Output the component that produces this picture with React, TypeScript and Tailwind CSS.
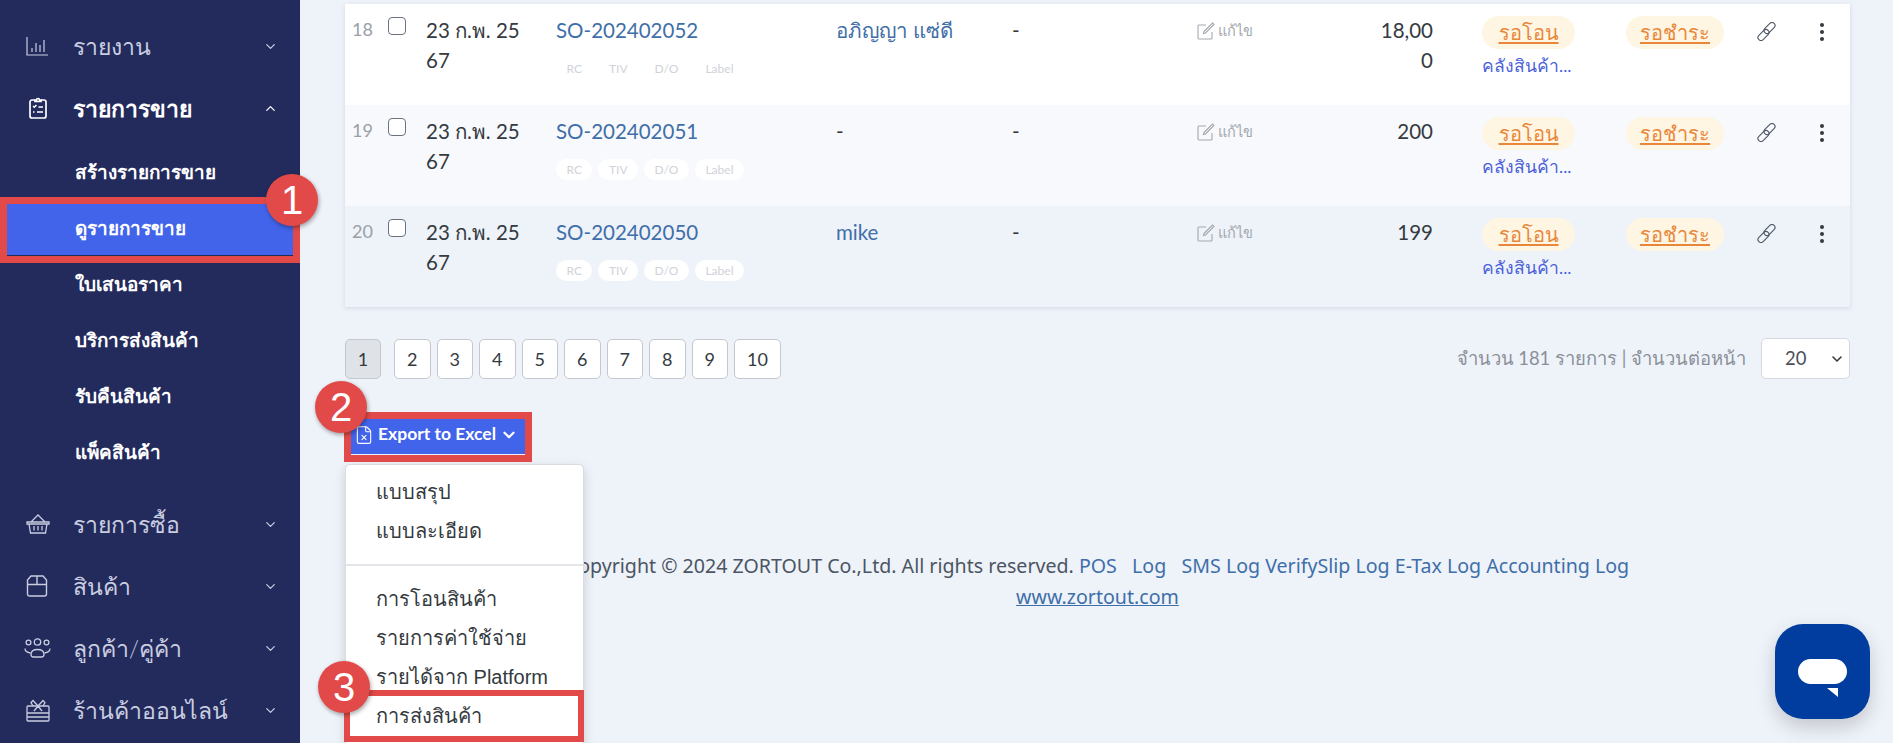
import { ChevronDown, ChevronUp, FileX } from "lucide-react";

const ROWS = [
  { no: 18, so: "SO-202402052", customer: "อภิญญา แซ่ดี", amount: "18,000", bg: "bg-white", isLink: true },
  { no: 19, so: "SO-202402051", customer: "-", amount: "200", bg: "bg-[#f7f9fc]", isLink: false },
  { no: 20, so: "SO-202402050", customer: "mike", amount: "199", bg: "bg-[#eef2f9]", isLink: true },
];

const SUB_MENU = ["สร้างรายการขาย", "ดูรายการขาย", "ใบเสนอราคา", "บริการส่งสินค้า", "รับคืนสินค้า", "แพ็คสินค้า"];
const TAGS = ["RC", "TIV", "D/O", "Label"];
const PAGES = [1, 2, 3, 4, 5, 6, 7, 8, 9, 10];

function BarsIcon() {
  return (
    <svg width="22" height="19" viewBox="0 0 22 19" fill="none" stroke="currentColor" strokeWidth="1.2">
      <path d="M1 0v18h21M6 15v-4M10 15V6M14 15V8M18 15V3" />
    </svg>
  );
}

function ClipboardIcon() {
  return (
    <svg width="18" height="22" viewBox="0 0 18 22" fill="none" stroke="currentColor" strokeWidth="1.7" className="ml-[3px]">
      <path d="M6 3H3a2 2 0 0 0-2 2v14a2 2 0 0 0 2 2h12a2 2 0 0 0 2-2V5a2 2 0 0 0-2-2h-3" />
      <path d="M6 4.500V3h1.500a1.500 1.500 0 0 1 3 0H12v1.500z" />
      <path d="M4 9l1.300 1.300L7.500 8M4 15h1.500M9.500 10H14M8 15h6" strokeWidth="1.5" />
    </svg>
  );
}

function BasketIcon() {
  return (
    <svg width="24" height="20" viewBox="0 0 24 20" fill="none" stroke="currentColor" strokeWidth="1.3">
      <path d="M5 8l7-7 7 7M1 8h22v2H1zM3 10l1.500 9h15L21 10M8 12v4.500M12 12v4.500M16 12v4.500" />
    </svg>
  );
}

function BoxIcon() {
  return (
    <svg width="22" height="22" viewBox="0 0 22 22" fill="none" stroke="currentColor" strokeWidth="1.4">
      <path d="M5 1h12l3.500 4v14a2 2 0 0 1-2 2h-15a2 2 0 0 1-2-2V5zM1.500 9.500h19M11 1v8.500" />
    </svg>
  );
}

function PeopleIcon() {
  return (
    <svg width="27" height="20" viewBox="0 0 27 20" fill="none" stroke="currentColor" strokeWidth="1.3" className="-ml-[2px]">
      <circle cx="13.5" cy="4" r="3.2" />
      <circle cx="4.5" cy="4.5" r="2.4" />
      <circle cx="22.5" cy="4.5" r="2.4" />
      <path d="M9.500 19a2.500 2.500 0 0 1-2.500-2.500c0-3 2.500-5 6.500-5s6.500 2 6.500 5a2.500 2.500 0 0 1-2.500 2.500z" />
      <path d="M6.500 15C3 14.500 1 13 1 10.500M20.500 15c3.500-.5 5.500-2 5.500-4.500" />
    </svg>
  );
}

function GiftIcon() {
  return (
    <svg width="24" height="23" viewBox="0 0 24 23" fill="none" stroke="currentColor" strokeWidth="1.3">
      <path d="M2 7h20a1 1 0 0 1 1 1v13a1 1 0 0 1-1 1H2a1 1 0 0 1-1-1V8a1 1 0 0 1 1-1zM1 14h22M1 18h22" />
      <path d="M12 7L7 1.500 5 3.500 7 7M12 7l5-5.500 2 2L17 7M12 7l-4 5M12 7l4 5" />
    </svg>
  );
}

function ChainIcon() {
  return (
    <svg width="19" height="19" viewBox="0 0 19 19" fill="none" stroke="currentColor" strokeWidth="1.1">
      <rect x="9.500" y="-0.500" width="6" height="13" rx="3" transform="rotate(45 12.500 6)" />
      <rect x="3.500" y="6.500" width="6" height="13" rx="3" transform="rotate(45 6.500 13)" />
    </svg>
  );
}

function MainItem({ icon, label, open }: { icon: React.ReactNode; label: string; open?: boolean }) {
  return (
    <div className={`flex h-[62px] items-center pb-[2px] pl-[26px] pr-[22px] ${open ? "text-white" : "text-[#c9cde0]"}`}>
      <span className="flex w-[47px] shrink-0">{icon}</span>
      <span className={`flex-1 text-[23px] ${open ? "font-bold" : "font-light"}`}>{label}</span>
      {open ? <ChevronUp size={15} /> : <ChevronDown size={15} />}
    </div>
  );
}

function Row({ row }: { row: (typeof ROWS)[number] }) {
  return (
    <div className={`grid h-[101px] grid-cols-[43px_38px_130px_280px_176px_185px_175px_61px_49px_144px_131px_58px_35px] pt-[11px] text-[20.500px] leading-[30px] text-[#343a40] ${row.bg}`}>
      <div className="pl-[7px] pt-[1px] text-[18px] leading-[26px] text-[#9aa0a8]">{row.no}</div>
      <div className="pt-[2px]">
        <div className="h-[18px] w-[18px] rounded-[4px] border border-[#6b7280] bg-white" />
      </div>
      <div className="w-[98px] break-all">23 ก.พ. 2567</div>
      <div>
        <div className="text-[#3f6fa8]">{row.so}</div>
        <div className="mt-[13px] flex gap-[6px] text-[12px] leading-[21px] text-[#cfd3d9]">
          {TAGS.map((t) => (
            <span key={t} className="rounded-full bg-white px-[10.500px]">{t}</span>
          ))}
        </div>
      </div>
      <div className={row.isLink ? "text-[#3f6fa8]" : ""}>{row.customer}</div>
      <div>-</div>
      <div className="flex h-[30px] items-center gap-[3px] pt-[2px] text-[14.500px] text-[#a3a8af]">
        <svg width="18" height="18" viewBox="0 0 18 18" fill="none" stroke="currentColor" strokeWidth="1.1">
          <path d="M15 10v6a1 1 0 0 1-1 1H2a1 1 0 0 1-1-1V4a1 1 0 0 1 1-1h7M7 9.500L15.500 1 17 2.500 8.500 11l-2 .5z" />
        </svg>
        แก้ไข
      </div>
      <div className="flex justify-end">
        <span className="w-[54px] break-all text-right">{row.amount}</span>
      </div>
      <div />
      <div className="pt-[1px]">
        <span className="block w-[93px] rounded-full bg-[#fef5e3] py-[2px] text-center text-[20px] leading-[29px] text-[#e8873a] underline underline-offset-2">รอโอน</span>
        <span className="mt-[5px] block text-[17.500px] leading-[24px] text-[#4a5fd9]">คลังสินค้า...</span>
      </div>
      <div className="pt-[1px]">
        <span className="block w-[98px] rounded-full bg-[#fef5e3] py-[2px] text-center text-[20px] leading-[29px] text-[#e8873a] underline underline-offset-2">รอชำระ</span>
      </div>
      <div className="pt-[7px] text-[#4b5563]">
        <ChainIcon />
      </div>
      <div className="flex flex-col gap-[3px] pl-[5px] pt-[8px]">
        <span className="h-[4px] w-[4px] rounded-full bg-[#343a40]" />
        <span className="h-[4px] w-[4px] rounded-full bg-[#343a40]" />
        <span className="h-[4px] w-[4px] rounded-full bg-[#343a40]" />
      </div>
    </div>
  );
}

export default function App() {
  return (
    <div className="relative flex h-[743px] w-[1893px] overflow-hidden bg-[#eef2f9] font-['Lato','Noto_Sans',sans-serif]">
      <aside className="w-[300px] shrink-0 bg-[#232a5c] pt-[16px]">
        <MainItem icon={<BarsIcon />} label="รายงาน" />
        <MainItem icon={<ClipboardIcon />} label="รายการขาย" open />
        <div className="pt-[4px]">
          {SUB_MENU.map((item, i) => (
            <div
              key={item}
              className={`flex h-[56px] items-center pl-[75px] text-[18.900px] font-bold text-white ${i === 1 ? "bg-[#4264ea]" : ""}`}
            >
              {item}
            </div>
          ))}
        </div>
        <div className="pt-[14px]">
          <MainItem icon={<BasketIcon />} label="รายการซื้อ" />
          <MainItem icon={<BoxIcon />} label="สินค้า" />
          <MainItem icon={<PeopleIcon />} label="ลูกค้า/คู่ค้า" />
          <MainItem icon={<GiftIcon />} label="ร้านค้าออนไลน์" />
        </div>
      </aside>

      <main className="relative flex-1 pl-[45px] pr-[44px] pt-[4px]">
        <div className="w-[1505px] shadow-[0_1px_4px_rgba(160,170,190,0.35)]">
          {ROWS.map((row) => (
            <Row key={row.no} row={row} />
          ))}
        </div>

        <div className="mt-[31px] flex items-center justify-between">
          <div className="flex gap-[6px] text-[18px] text-[#343a40]">
            {PAGES.map((p) => (
              <div
                key={p}
                className={`flex h-[40px] items-center justify-center rounded-[5px] border border-[#c4c8ce] pt-[1px] ${
                  p === 1 ? "mr-[7px] w-[36px] bg-[#dfe3e8]" : p === 10 ? "w-[47px] bg-white" : "w-[36.500px] bg-white"
                }`}
              >
                {p}
              </div>
            ))}
          </div>
          <div className="flex items-center gap-[15px] text-[18.400px] text-[#8a8f98]">
            จำนวน 181 รายการ | จำนวนต่อหน้า
            <div className="flex h-[41px] w-[89px] items-center justify-between rounded-[5px] border border-[#d5d9df] bg-white pl-[23px] pr-[4px] text-[#495057]">
              20
              <ChevronDown size={16} strokeWidth={2.4} className="text-[#343a40]" />
            </div>
          </div>
        </div>

        <div className="relative mt-[37px] w-fit">
          <button className="flex h-[38px] w-[180px] items-center gap-[4px] bg-[#4264ea] pb-[1px] pl-[9px] text-[17.500px] font-bold text-white">
            <FileX size={20} strokeWidth={1.3} />
            Export to Excel
            <ChevronDown size={18} strokeWidth={3} />
          </button>
        </div>

        <div className="mt-[97px] text-center font-['Noto_Sans',sans-serif] text-[19.600px] leading-[30.500px] text-[#4b5563]">
          <div>
            Copyright © 2024 ZORTOUT Co.,Ltd. All rights reserved. <span className="text-[#3f6fa8]">POS &nbsp; Log &nbsp; SMS Log VerifySlip Log E-Tax Log Accounting Log</span>
          </div>
          <div className="text-[#3f6fa8] underline">www.zortout.com</div>
        </div>
      </main>

      <div className="absolute left-[345px] top-[464px] h-[290px] w-[239px] rounded-[5px] border border-[#d9dce1] bg-white pt-[7px] font-['Liberation_Sans',sans-serif] text-[20px] text-[#343a40] shadow-[0_4px_12px_rgba(0,0,0,0.15)]">
        <div className="flex h-[39px] items-center pl-[30px]">แบบสรุป</div>
        <div className="flex h-[39px] items-center pl-[30px]">แบบละเอียด</div>
        <div className="mb-[13px] mt-[14px] h-[2px] bg-[#e3e5e8]" />
        <div className="flex h-[39px] items-center pl-[30px]">การโอนสินค้า</div>
        <div className="flex h-[39px] items-center pl-[30px]">รายการค่าใช้จ่าย</div>
        <div className="flex h-[39px] items-center pl-[30px]">รายได้จาก Platform</div>
        <div className="flex h-[39px] items-center pl-[30px]">การส่งสินค้า</div>
      </div>

      {/* annotations */}
      <div className="absolute left-0 top-[197px] h-[66px] w-[300px] border-[7px] border-[#e24a49] shadow-[inset_0_-1px_0_#232a5c]" />
      <div className="absolute left-[344px] top-[412px] h-[50px] w-[188px] border-[7px] border-[#e24a49]" />
      <div className="absolute left-[344px] top-[690px] h-[52px] w-[240px] border-[6px] border-[#e24a49]" />
      {[
        { n: 1, cls: "left-[266px] top-[174px]" },
        { n: 2, cls: "left-[315px] top-[381px]" },
        { n: 3, cls: "left-[318px] top-[661px]" },
      ].map((b) => (
        <div
          key={b.n}
          className={`absolute flex h-[52px] w-[52px] items-center justify-center rounded-full bg-[#e24a49] font-['Liberation_Sans',sans-serif] text-[40px] text-white shadow-[1px_2px_4px_rgba(0,0,0,0.35)] ${b.cls}`}
        >
          {b.n}
        </div>
      ))}

      <div className="absolute left-[1775px] top-[624px] flex h-[95px] w-[95px] items-center justify-center rounded-[28px] bg-[#003d9e] shadow-[0_8px_20px_rgba(0,0,0,0.18)]">
        <svg width="49" height="38" viewBox="0 0 49 38" fill="white" className="mt-[13px]">
          <rect width="49" height="25" rx="12.500" />
          <path d="M29 29h11v9z" />
        </svg>
      </div>
    </div>
  );
}
